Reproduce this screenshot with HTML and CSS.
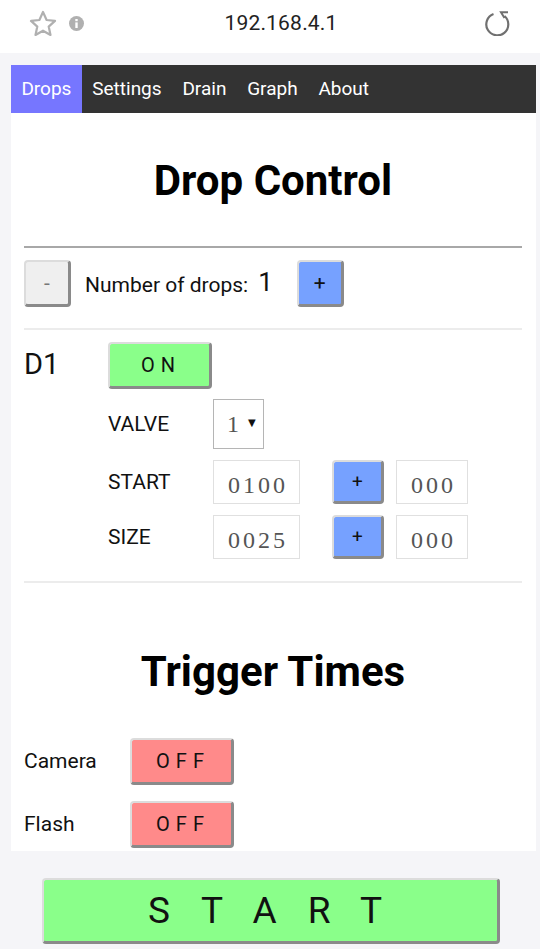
FILE: index.html
```html
<!DOCTYPE html>
<html lang="en">
<head>
<meta charset="utf-8">
<title>Drop Control</title>
<link rel="stylesheet" href="styles.css">
</head>
<body>
<header class="addr">
  <svg class="star" width="28" height="26" viewBox="0 0 28 26"><path d="M14 2l3.600 8 8.400.9-6.300 5.700 1.800 8.400L14 20.700 6.500 25l1.800-8.400L2 10.900l8.400-.9z" fill="none" stroke="#b0b0b0" stroke-width="2.200" stroke-linejoin="round"/></svg>
  <svg class="info" width="15" height="15" viewBox="0 0 15 15"><circle cx="7.500" cy="7.500" r="7.500" fill="#b0b0b0"/><rect x="6.300" y="6.400" width="2.400" height="5.600" fill="#fff"/><rect x="6.300" y="3" width="2.400" height="2.200" fill="#fff"/></svg>
  <span class="url">192.168.4.1</span>
  <svg class="reload" width="26" height="26" viewBox="0 0 26 26"><path d="M8.500 4A11 11 0 1 0 19.500 6" fill="none" stroke="#707070" stroke-width="2.200"/><path d="M23 2.300H16L19.500 8" fill="none" stroke="#707070" stroke-width="2"/></svg>
</header>
<main class="page">
  <nav class="tabs">
    <a class="tab active">Drops</a><a class="tab">Settings</a><a class="tab">Drain</a><a class="tab">Graph</a><a class="tab">About</a>
  </nav>
  <section class="content">
    <h1 class="title first">Drop Control</h1>
    <hr class="rule dark">
    <div class="count">
      <button class="btn small grey">-</button>
      <span class="count-label">Number of drops:</span>
      <span class="count-val">1</span>
      <button class="btn small blue">+</button>
    </div>
    <hr class="rule light">
    <div class="drop">
      <div class="drop-name">D1</div>
      <div class="drop-body">
        <button class="btn toggle green">ON</button>
        <div class="field valve"><label class="lab">VALVE</label><div class="sel"><span>1</span><i class="arrow">▼</i></div></div>
        <div class="field start"><label class="lab">START</label><div class="num wide">0100</div><button class="btn plus blue">+</button><div class="num narrow">000</div></div>
        <div class="field size"><label class="lab">SIZE</label><div class="num wide">0025</div><button class="btn plus blue">+</button><div class="num narrow">000</div></div>
      </div>
    </div>
    <hr class="rule light after">
    <h1 class="title second">Trigger Times</h1>
    <div class="trig cam"><span class="trig-lab">Camera</span><button class="btn toggle red">OFF</button></div>
    <div class="trig fla"><span class="trig-lab">Flash</span><button class="btn toggle red">OFF</button></div>
  </section>
  <div class="foot"><button class="btn go">START</button></div>
</main>
</body>
</html>
```
FILE: styles.css
```css
* { box-sizing: border-box; }
html, body { margin: 0; height: 949px; overflow: hidden; }
body { background: #f5f5f8; font-family: Roboto, sans-serif; color: #111; }
.addr { height: 53px; background: #fff; display: flex; align-items: center; padding-left: 29px; position: relative; }
.star { margin-top: -7px; }
.info { margin-left: 12px; margin-top: -7px; }
.url { position: absolute; left: 22px; right: 0; top: 11px; text-align: center; font-size: 21px; line-height: 25px; letter-spacing: .2px; color: #222; }
.reload { position: absolute; left: 485px; top: 10px; }
.page { padding: 12px 4px 0 11px; }
.tabs { display: flex; height: 48px; background: #333; }
.tab { color: #fff; font-size: 19px; line-height: 48px; padding: 0 10.400px; }
.active { background: #7676ff; }
.content { background: #fff; height: 738px; padding: 0 14px 0 13px; }
.title { margin: 0; text-align: center; font-size: 42px; line-height: 47px; font-weight: 700; color: #000; }
.first { padding-top: 44px; }
.second { padding-top: 65px; }
.rule { border: 0; height: 2px; margin: 0; }
.dark { margin-top: 42px; background: #a8a8a8; }
.light { background: #ececec; }
.count { display: flex; align-items: center; height: 47px; margin: 12px 0 21px; }
.btn { font-family: Roboto, sans-serif; border-style: solid; border-width: 2px 3px 3px 2px; border-color: #dcdcdc #8a8a8a #8a8a8a #dcdcdc; border-radius: 4px; padding: 0; color: #111; }
.small { width: 47px; height: 47px; font-size: 21px; }
.grey { background: #efefef; color: #777; }
.blue { background: #76a1ff; }
.green { background: #8aff8a; }
.red { background: #ff8a8a; }
.count-label { margin-left: 14px; font-size: 21px; padding-top: 2px; }
.count-val { margin: -4px 24px 0 10px; font-size: 26px; }
.drop { display: flex; padding-top: 12px; }
.drop-name { width: 84px; font-size: 29px; line-height: 44px; }
.drop-body { flex: 1; }
.toggle { display: block; width: 104px; height: 47px; font-size: 20px; letter-spacing: 6px; padding-left: 3px; }
.field { display: flex; align-items: flex-start; }
.lab { width: 105px; font-size: 21px; line-height: 24px; }
.valve { margin-top: 10px; }
.valve .lab { padding-top: 13px; }
.sel { width: 51px; height: 50px; border: 1px solid #b5b5b5; display: flex; align-items: center; padding-left: 13px; font-family: "Liberation Serif", serif; font-size: 24px; color: #555; }
.arrow { font-style: normal; font-size: 10px; color: #111; margin: -3px 0 0 9px; font-family: "DejaVu Sans", sans-serif; }
.start { margin-top: 11px; }
.size { margin-top: 11px; }
.start .lab, .size .lab { padding-top: 10px; }
.num { height: 44px; border: 1px solid #e0e0e0; font-family: "Liberation Serif", serif; font-size: 24px; line-height: 48px; color: #555; letter-spacing: 3px; padding-left: 14px; }
.wide { width: 87px; }
.narrow { width: 72px; margin-left: 12px; }
.plus { width: 52px; height: 44px; font-size: 19px; margin-left: 32px; }
.after { margin-top: 22px; }
.trig { display: flex; align-items: center; height: 47px; }
.cam { margin-top: 43px; }
.fla { margin-top: 16px; }
.trig-lab { width: 106px; font-size: 21px; padding-bottom: 2px; }
.foot { padding: 27px 0 0 31px; }
.go { width: 458px; height: 66px; background: #8aff8a; font-size: 37px; letter-spacing: 31px; padding-left: 20px; }
```
